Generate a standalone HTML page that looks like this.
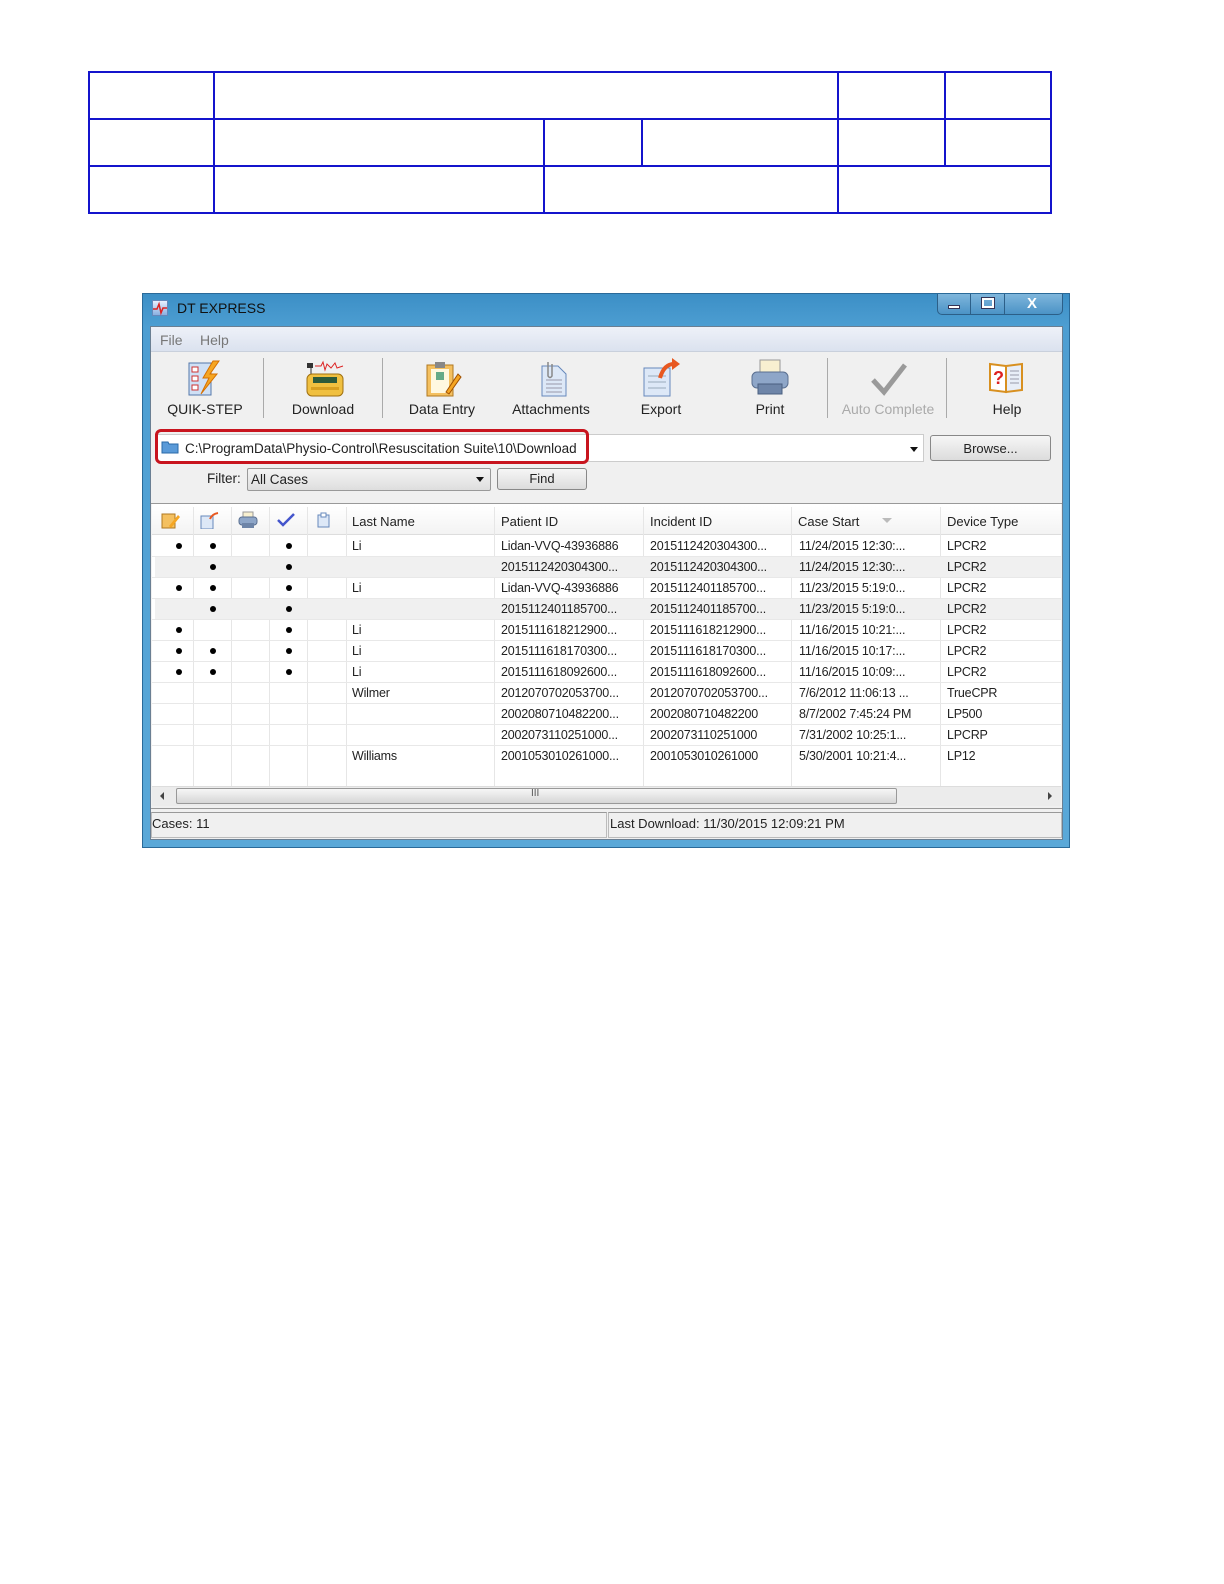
<!DOCTYPE html>
<html><head><meta charset="utf-8">
<style>
*{margin:0;padding:0;box-sizing:border-box}
body{width:1224px;height:1584px;background:#fff;position:relative;font-family:"Liberation Sans","DejaVu Sans",sans-serif;overflow:hidden}
.a{position:absolute}
.hl{position:absolute;height:2px;background:#1414cc}
.vl{position:absolute;width:2px;background:#1414cc}
.t{position:absolute;font-size:13px;color:#222;white-space:nowrap}
.tb{position:absolute;font-size:14px;color:#222;white-space:nowrap;text-align:center}
.sep{position:absolute;width:1px;background:#aaa;top:358px;height:60px}
.row{position:absolute;left:155px;width:906px;height:21px}
.cell{position:absolute;font-size:12.5px;color:#222;top:3px;white-space:nowrap;letter-spacing:-0.2px}
.dot{position:absolute;width:6px;height:6px;border-radius:3px;background:#000;top:7px}
.gv{position:absolute;width:1px;background:#e6e6e6;top:507px;height:280px}
</style></head><body>

<!-- top table -->
<div class="hl" style="left:89px;top:71px;width:963px"></div>
<div class="hl" style="left:89px;top:118px;width:963px"></div>
<div class="hl" style="left:89px;top:165px;width:963px"></div>
<div class="hl" style="left:89px;top:212px;width:963px"></div>
<div class="vl" style="left:88px;top:71px;height:143px"></div>
<div class="vl" style="left:213px;top:71px;height:143px"></div>
<div class="vl" style="left:1050px;top:71px;height:143px"></div>
<div class="vl" style="left:837px;top:71px;height:143px"></div>
<div class="vl" style="left:944px;top:71px;height:95px"></div>
<div class="vl" style="left:543px;top:118px;height:95px"></div>
<div class="vl" style="left:641px;top:118px;height:48px"></div>

<!-- window -->
<div class="a" style="left:142px;top:293px;width:928px;height:555px;background:linear-gradient(180deg,#3c8fc6 0%,#4d9ed2 6%,#5aa8d8 100%);border:1px solid #2a6a99"></div>
<div class="a" style="left:152px;top:300px;width:16px;height:16px;background:linear-gradient(#e8f0ff,#8ab0e0);border:1px solid #6688bb"></div>
<svg class="a" style="left:152px;top:300px" width="16" height="16"><path d="M1 9 L5 9 L7 4 L9 13 L11 8 L15 8" stroke="#d22" stroke-width="1.5" fill="none"/></svg>
<div class="t" style="left:177px;top:300px;font-size:14px;color:#111">DT EXPRESS</div>
<div class="a" style="left:937px;top:294px;width:126px;height:21px;border:1px solid #2c5f88;border-top:none;border-radius:0 0 5px 5px;background:linear-gradient(#7fb6dc,#4b93c6)"></div>
<div class="a" style="left:970px;top:294px;width:1px;height:21px;background:#2c5f88"></div>
<div class="a" style="left:1004px;top:294px;width:1px;height:21px;background:#2c5f88"></div>
<div class="a" style="left:948px;top:305px;width:12px;height:4px;background:#fff;border:1px solid #335"></div>
<div class="a" style="left:982px;top:298px;width:12px;height:10px;border:2px solid #fff;outline:1px solid #335"></div>
<div class="t" style="left:1027px;top:295px;font-size:15px;font-weight:bold;color:#fff">X</div>

<div class="a" style="left:150px;top:326px;width:913px;height:514px;background:#f0f0f0;border:1px solid #6a7f93"></div>
<!-- menu -->
<div class="a" style="left:151px;top:327px;width:911px;height:25px;background:linear-gradient(#eef1f8,#dbe2ef);border-bottom:1px solid #c9d0dc"></div>
<div class="t" style="left:160px;top:332px;font-size:14px;color:#777">File</div>
<div class="t" style="left:200px;top:332px;font-size:14px;color:#777">Help</div>

<!-- toolbar -->
<div class="sep" style="left:263px"></div>
<div class="sep" style="left:382px"></div>
<div class="sep" style="left:827px"></div>
<div class="sep" style="left:946px"></div>
<!-- icons -->
<svg class="a" style="left:187px;top:360px" width="36" height="38"><rect x="2" y="3" width="22" height="32" fill="#cfe0f5" stroke="#5577aa"/><rect x="5" y="7" width="6" height="5" fill="#fff" stroke="#c33"/><rect x="5" y="16" width="6" height="5" fill="#fff" stroke="#c33"/><rect x="5" y="25" width="6" height="5" fill="#fff" stroke="#c33"/><path d="M26 1 L16 18 L22 18 L14 34 L30 14 L23 14 L32 1Z" fill="#f5a623" stroke="#d67000"/></svg>
<svg class="a" style="left:303px;top:360px" width="42" height="38"><path d="M8 6 L8 20 L10 28" stroke="#333" fill="none"/><rect x="4" y="3" width="6" height="5" fill="#333"/><path d="M12 6 L18 6 L20 2 L22 10 L24 4 L28 8 L32 3 L34 8 L40 6" stroke="#d22" fill="none"/><rect x="4" y="14" width="36" height="22" rx="5" fill="#f0c040" stroke="#a07010"/><rect x="10" y="17" width="24" height="6" fill="#2c5a3a"/><rect x="8" y="27" width="28" height="3" fill="#d8a020"/></svg>
<svg class="a" style="left:424px;top:360px" width="38" height="38"><rect x="3" y="5" width="26" height="31" fill="#f4c060" stroke="#b07820"/><rect x="7" y="9" width="18" height="24" fill="#fff8e0"/><rect x="11" y="2" width="10" height="6" fill="#888"/><rect x="12" y="12" width="8" height="8" fill="#6a8"/><path d="M22 32 L34 14 L37 17 L25 34Z" fill="#f5a623" stroke="#a05000"/></svg>
<svg class="a" style="left:536px;top:360px" width="34" height="38"><path d="M6 6 L22 6 L30 14 L30 36 L6 36Z" fill="#dde8f7" stroke="#6688bb"/><path d="M12 2 L12 16 Q14 19 16 16 L16 4" stroke="#888" fill="none" stroke-width="1.5"/><path d="M10 20 H26 M10 24 H26 M10 28 H26 M10 32 H26" stroke="#99a"/></svg>
<svg class="a" style="left:640px;top:358px" width="42" height="40"><rect x="4" y="10" width="26" height="28" fill="#dde8f7" stroke="#6688bb"/><path d="M8 18 H26 M8 24 H26 M8 30 H26" stroke="#9ab" /><path d="M20 20 Q24 6 34 6" stroke="#e85820" stroke-width="4" fill="none"/><path d="M32 0 L40 6 L32 12Z" fill="#e85820"/></svg>
<svg class="a" style="left:750px;top:358px" width="40" height="40"><rect x="10" y="2" width="20" height="14" fill="#f8f0d0" stroke="#999"/><rect x="2" y="14" width="36" height="16" rx="5" fill="#8ea6c8" stroke="#5a6f90"/><rect x="8" y="26" width="24" height="10" fill="#6e85a8" stroke="#4a5f80"/></svg>
<svg class="a" style="left:870px;top:362px" width="38" height="34"><path d="M3 18 L14 30 L35 3" stroke="#9a9a9a" stroke-width="5" fill="none"/></svg>
<svg class="a" style="left:988px;top:360px" width="38" height="34"><path d="M2 4 L18 6 L18 32 L2 30Z" fill="#fff" stroke="#d89020" stroke-width="2"/><path d="M18 6 L34 4 L34 30 L18 32Z" fill="#e8eef8" stroke="#d89020" stroke-width="2"/><text x="5" y="24" font-size="18" font-weight="bold" fill="#d22" font-family="Liberation Sans">?</text><path d="M22 11 H31 M22 15 H31 M22 19 H31 M22 23 H31" stroke="#99a"/></svg>
<div class="tb" style="left:160px;top:401px;width:90px">QUIK-STEP</div>
<div class="tb" style="left:278px;top:401px;width:90px">Download</div>
<div class="tb" style="left:397px;top:401px;width:90px">Data Entry</div>
<div class="tb" style="left:500px;top:401px;width:102px">Attachments</div>
<div class="tb" style="left:616px;top:401px;width:90px">Export</div>
<div class="tb" style="left:725px;top:401px;width:90px">Print</div>
<div class="tb" style="left:832px;top:401px;width:112px;color:#aaa">Auto Complete</div>
<div class="tb" style="left:962px;top:401px;width:90px">Help</div>

<!-- path row -->
<div class="a" style="left:156px;top:434px;width:768px;height:28px;background:#fff;border:1px solid #ccc"></div>
<div class="a" style="left:155px;top:429px;width:434px;height:35px;border:3px solid #c8141e;border-radius:6px"></div>
<svg class="a" style="left:161px;top:440px" width="18" height="14"><path d="M1 2 L7 2 L8 4 L17 4 L17 13 L1 13Z" fill="#5a9ad8" stroke="#2a6aa8"/></svg>
<div class="t" style="left:185px;top:441px;font-size:13.5px">C:\ProgramData\Physio-Control\Resuscitation Suite\10\Download</div>
<div class="a" style="left:910px;top:447px;border:4px solid transparent;border-top:5px solid #111"></div>
<div class="a" style="left:930px;top:435px;width:121px;height:26px;border:1px solid #888;border-radius:3px;background:linear-gradient(#f6f6f6,#dcdcdc)"></div>
<div class="tb" style="left:930px;top:441px;width:121px;font-size:13px">Browse...</div>

<!-- filter -->
<div class="t" style="left:207px;top:471px;font-size:13.5px">Filter:</div>
<div class="a" style="left:247px;top:468px;width:244px;height:23px;border:1px solid #999;border-radius:2px;background:linear-gradient(#f4f4f4,#dedede)"></div>
<div class="t" style="left:251px;top:472px;font-size:13.5px">All Cases</div>
<div class="a" style="left:476px;top:477px;border:4px solid transparent;border-top:5px solid #111"></div>
<div class="a" style="left:497px;top:468px;width:90px;height:22px;border:1px solid #888;border-radius:3px;background:linear-gradient(#f6f6f6,#dcdcdc)"></div>
<div class="tb" style="left:497px;top:471px;width:90px;font-size:13px">Find</div>

<!-- grid -->
<div class="a" style="left:151px;top:503px;width:911px;height:1px;background:#999"></div>
<div class="a" style="left:152px;top:504px;width:909px;height:283px;background:#fff"></div>
<div class="a" style="left:152px;top:506px;width:909px;height:29px;background:linear-gradient(#fff,#f3f3f3);border-bottom:1px solid #ddd"></div>
<div class="gv" style="left:193px"></div><div class="gv" style="left:231px"></div><div class="gv" style="left:269px"></div><div class="gv" style="left:307px"></div><div class="gv" style="left:346px"></div><div class="gv" style="left:494px"></div><div class="gv" style="left:643px"></div><div class="gv" style="left:791px"></div><div class="gv" style="left:940px"></div>
<svg class="a" style="left:161px;top:511px" width="20" height="18"><rect x="1" y="3" width="13" height="14" fill="#f4c060" stroke="#b07820"/><path d="M8 15 L17 4 L19 6 L10 17Z" fill="#f5a623"/></svg>
<svg class="a" style="left:200px;top:511px" width="20" height="18"><rect x="1" y="5" width="12" height="13" fill="#dde8f7" stroke="#6688bb"/><path d="M10 8 Q12 3 18 2" stroke="#e85820" stroke-width="2" fill="none"/></svg>
<svg class="a" style="left:238px;top:511px" width="20" height="18"><rect x="5" y="1" width="10" height="6" fill="#f8f0d0" stroke="#999"/><rect x="1" y="6" width="18" height="8" rx="3" fill="#8ea6c8" stroke="#5a6f90"/><rect x="4" y="12" width="12" height="5" fill="#6e85a8"/></svg>
<svg class="a" style="left:276px;top:512px" width="20" height="16"><path d="M2 8 L7 13 L18 2" stroke="#4455cc" stroke-width="2.5" fill="none"/></svg>
<svg class="a" style="left:317px;top:512px" width="14" height="16"><rect x="1" y="3" width="11" height="12" fill="#dde8f7" stroke="#6688bb"/><rect x="4" y="1" width="5" height="4" fill="#fff" stroke="#6688bb"/></svg>
<div class="t" style="left:352px;top:514px">Last Name</div>
<div class="t" style="left:501px;top:514px">Patient ID</div>
<div class="t" style="left:650px;top:514px">Incident ID</div>
<div class="t" style="left:798px;top:514px">Case Start</div>
<div class="a" style="left:882px;top:518px;border:5px solid transparent;border-top:5px solid #bbb"></div>
<div class="t" style="left:947px;top:514px">Device Type</div>

<div class="row" style="top:536px"><div class="dot" style="left:21px"></div><div class="dot" style="left:55px"></div><div class="dot" style="left:131px"></div><div class="cell" style="left:197px">Li</div><div class="cell" style="left:346px">Lidan-VVQ-43936886</div><div class="cell" style="left:495px">2015112420304300...</div><div class="cell" style="left:644px">11/24/2015 12:30:...</div><div class="cell" style="left:792px">LPCR2</div></div>
<div class="row" style="top:557px;background:#f0f0f0"><div class="dot" style="left:55px"></div><div class="dot" style="left:131px"></div><div class="cell" style="left:346px">2015112420304300...</div><div class="cell" style="left:495px">2015112420304300...</div><div class="cell" style="left:644px">11/24/2015 12:30:...</div><div class="cell" style="left:792px">LPCR2</div></div>
<div class="row" style="top:578px"><div class="dot" style="left:21px"></div><div class="dot" style="left:55px"></div><div class="dot" style="left:131px"></div><div class="cell" style="left:197px">Li</div><div class="cell" style="left:346px">Lidan-VVQ-43936886</div><div class="cell" style="left:495px">2015112401185700...</div><div class="cell" style="left:644px">11/23/2015 5:19:0...</div><div class="cell" style="left:792px">LPCR2</div></div>
<div class="row" style="top:599px;background:#f0f0f0"><div class="dot" style="left:55px"></div><div class="dot" style="left:131px"></div><div class="cell" style="left:346px">2015112401185700...</div><div class="cell" style="left:495px">2015112401185700...</div><div class="cell" style="left:644px">11/23/2015 5:19:0...</div><div class="cell" style="left:792px">LPCR2</div></div>
<div class="row" style="top:620px"><div class="dot" style="left:21px"></div><div class="dot" style="left:131px"></div><div class="cell" style="left:197px">Li</div><div class="cell" style="left:346px">2015111618212900...</div><div class="cell" style="left:495px">2015111618212900...</div><div class="cell" style="left:644px">11/16/2015 10:21:...</div><div class="cell" style="left:792px">LPCR2</div></div>
<div class="row" style="top:641px"><div class="dot" style="left:21px"></div><div class="dot" style="left:55px"></div><div class="dot" style="left:131px"></div><div class="cell" style="left:197px">Li</div><div class="cell" style="left:346px">2015111618170300...</div><div class="cell" style="left:495px">2015111618170300...</div><div class="cell" style="left:644px">11/16/2015 10:17:...</div><div class="cell" style="left:792px">LPCR2</div></div>
<div class="row" style="top:662px"><div class="dot" style="left:21px"></div><div class="dot" style="left:55px"></div><div class="dot" style="left:131px"></div><div class="cell" style="left:197px">Li</div><div class="cell" style="left:346px">2015111618092600...</div><div class="cell" style="left:495px">2015111618092600...</div><div class="cell" style="left:644px">11/16/2015 10:09:...</div><div class="cell" style="left:792px">LPCR2</div></div>
<div class="row" style="top:683px"><div class="cell" style="left:197px">Wilmer</div><div class="cell" style="left:346px">2012070702053700...</div><div class="cell" style="left:495px">2012070702053700...</div><div class="cell" style="left:644px">7/6/2012 11:06:13 ...</div><div class="cell" style="left:792px">TrueCPR</div></div>
<div class="row" style="top:704px"><div class="cell" style="left:346px">2002080710482200...</div><div class="cell" style="left:495px">2002080710482200</div><div class="cell" style="left:644px">8/7/2002 7:45:24 PM</div><div class="cell" style="left:792px">LP500</div></div>
<div class="row" style="top:725px"><div class="cell" style="left:346px">2002073110251000...</div><div class="cell" style="left:495px">2002073110251000</div><div class="cell" style="left:644px">7/31/2002 10:25:1...</div><div class="cell" style="left:792px">LPCRP</div></div>
<div class="row" style="top:746px"><div class="cell" style="left:197px">Williams</div><div class="cell" style="left:346px">2001053010261000...</div><div class="cell" style="left:495px">2001053010261000</div><div class="cell" style="left:644px">5/30/2001 10:21:4...</div><div class="cell" style="left:792px">LP12</div></div>
<!-- row lines -->
<div class="a" style="left:152px;top:556px;width:909px;height:210px;background:repeating-linear-gradient(180deg,#e8e8e8 0,#e8e8e8 1px,transparent 1px,transparent 21px)"></div>

<!-- scrollbar -->
<div class="a" style="left:152px;top:786px;width:909px;height:20px;background:#ececec;border-top:1px solid #ddd"></div>
<div class="a" style="left:176px;top:788px;width:721px;height:16px;border:1px solid #999;border-radius:2px;background:linear-gradient(#f6f6f6,#d6d6d6)"></div>
<div class="t" style="left:531px;top:788px;font-size:10px;color:#555">III</div>
<div class="a" style="left:160px;top:792px;border:4px solid transparent;border-right:4px solid #444;border-left:none"></div>
<div class="a" style="left:1048px;top:792px;border:4px solid transparent;border-left:4px solid #444;border-right:none"></div>
<div class="a" style="left:151px;top:808px;width:911px;height:1px;background:#999"></div>

<!-- status -->
<div class="a" style="left:151px;top:812px;width:456px;height:26px;border:1px solid #bbb;border-top-color:#999;background:#f0f0f0"></div>
<div class="a" style="left:608px;top:812px;width:454px;height:26px;border:1px solid #bbb;border-top-color:#999;background:#f0f0f0"></div>
<div class="t" style="left:152px;top:816px;font-size:13px">Cases: 11</div>
<div class="t" style="left:610px;top:816px;font-size:13px">Last Download: 11/30/2015 12:09:21 PM</div>
</body></html>
